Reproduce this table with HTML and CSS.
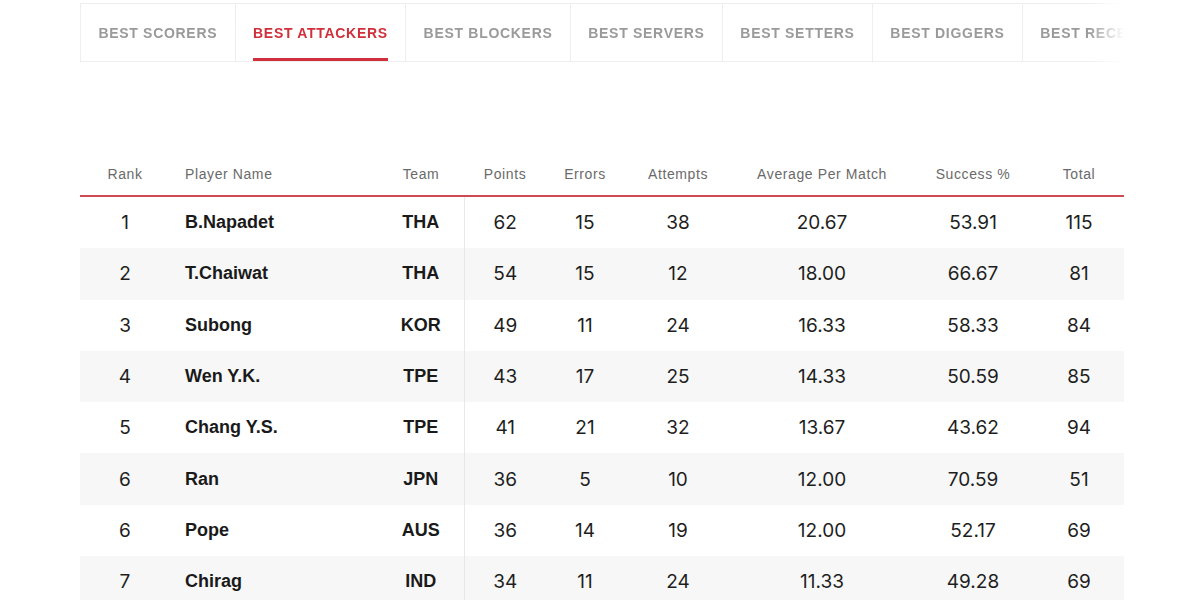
FILE: index.html
```html
<!DOCTYPE html>
<html lang="en">
<head>
<meta charset="utf-8">
<title>Best Attackers</title>
<link rel="stylesheet" href="styles.css">
</head>
<body>
<div class="page">
  <nav class="tabs">
    <a class="tab">BEST SCORERS</a>
    <a class="tab active">BEST ATTACKERS</a>
    <a class="tab">BEST BLOCKERS</a>
    <a class="tab">BEST SERVERS</a>
    <a class="tab">BEST SETTERS</a>
    <a class="tab">BEST DIGGERS</a>
    <a class="tab">BEST RECEIVERS</a>
  </nav>

  <table class="stats">
    <colgroup>
      <col class="c-rank">
      <col class="c-name">
      <col class="c-team">
      <col class="c-points">
      <col class="c-errors">
      <col class="c-attempts">
      <col class="c-avg">
      <col class="c-success">
      <col class="c-total">
    </colgroup>
    <thead>
      <tr>
        <th>Rank</th>
        <th class="left">Player Name</th>
        <th>Team</th>
        <th>Points</th>
        <th>Errors</th>
        <th>Attempts</th>
        <th>Average Per Match</th>
        <th>Success %</th>
        <th>Total</th>
      </tr>
    </thead>
    <tbody>
      <tr><td>1</td><td class="name">B.Napadet</td><td class="team">THA</td><td class="pts">62</td><td>15</td><td>38</td><td>20.67</td><td>53.91</td><td>115</td></tr>
      <tr><td>2</td><td class="name">T.Chaiwat</td><td class="team">THA</td><td class="pts">54</td><td>15</td><td>12</td><td>18.00</td><td>66.67</td><td>81</td></tr>
      <tr><td>3</td><td class="name">Subong</td><td class="team">KOR</td><td class="pts">49</td><td>11</td><td>24</td><td>16.33</td><td>58.33</td><td>84</td></tr>
      <tr><td>4</td><td class="name">Wen Y.K.</td><td class="team">TPE</td><td class="pts">43</td><td>17</td><td>25</td><td>14.33</td><td>50.59</td><td>85</td></tr>
      <tr><td>5</td><td class="name">Chang Y.S.</td><td class="team">TPE</td><td class="pts">41</td><td>21</td><td>32</td><td>13.67</td><td>43.62</td><td>94</td></tr>
      <tr><td>6</td><td class="name">Ran</td><td class="team">JPN</td><td class="pts">36</td><td>5</td><td>10</td><td>12.00</td><td>70.59</td><td>51</td></tr>
      <tr><td>6</td><td class="name">Pope</td><td class="team">AUS</td><td class="pts">36</td><td>14</td><td>19</td><td>12.00</td><td>52.17</td><td>69</td></tr>
      <tr><td>7</td><td class="name">Chirag</td><td class="team">IND</td><td class="pts">34</td><td>11</td><td>24</td><td>11.33</td><td>49.28</td><td>69</td></tr>
    </tbody>
  </table>
</div>
</body>
</html>
```

FILE: styles.css
```css
html, body {
  margin: 0;
  padding: 0;
  background: #ffffff;
}

body {
  font-family: "Liberation Sans", Arial, sans-serif;
  color: #222;
  overflow: hidden;
}

.page {
  width: 1044px;
  margin-left: 80px;
  padding-top: 3px;
}

.tabs {
  display: flex;
  height: 57px;
  border: 1px solid #eeeeee;
  border-right: none;
  box-shadow: 0 1px 2px rgba(0, 0, 0, 0.03);
  overflow: hidden;
  white-space: nowrap;
  -webkit-mask-image: linear-gradient(to right, #000 0, #000 1008px, transparent 1044px);
  mask-image: linear-gradient(to right, #000 0, #000 1008px, transparent 1044px);
}

.tab {
  flex: none;
  display: flex;
  align-items: center;
  padding: 0 17.4px;
  border-right: 1px solid #eeeeee;
  font-size: 14px;
  font-weight: 700;
  letter-spacing: 0.7px;
  color: #9a9a9a;
  position: relative;
}

.tab.active {
  color: #d0303b;
}

.tab.active::after {
  content: "";
  position: absolute;
  left: 17.4px;
  right: 17.4px;
  bottom: 0;
  height: 3px;
  background: #d0303b;
}

.stats {
  margin-top: 91px;
  width: 1044px;
  border-collapse: collapse;
  table-layout: fixed;
}

.c-rank { width: 90px; }
.c-name { width: 208px; }
.c-team { width: 86px; }
.c-points { width: 82px; }
.c-errors { width: 78px; }
.c-attempts { width: 108px; }
.c-avg { width: 180px; }
.c-success { width: 122px; }
.c-total { width: 90px; }

.stats th {
  height: 42px;
  padding: 0;
  font-weight: 400;
  font-size: 14px;
  letter-spacing: 0.6px;
  color: #6a6a6a;
  text-align: center;
  border-bottom: 2px solid #cf4a53;
  vertical-align: middle;
}

.stats th.left {
  text-align: left;
  padding-left: 15px;
}

.stats td {
  height: 51.3px;
  padding: 0;
  text-align: center;
  vertical-align: middle;
  font-family: "Inter", "Liberation Sans", sans-serif;
  font-size: 19px;
  color: #1e1e1e;
}

.stats tbody tr:nth-child(even) td {
  background: #f7f7f7;
}

.stats td.name {
  text-align: left;
  padding-left: 15px;
  font-family: "Liberation Sans", Arial, sans-serif;
  font-weight: 700;
  font-size: 18px;
  color: #1a1a1a;
}

.stats td.team {
  font-family: "Liberation Sans", Arial, sans-serif;
  font-weight: 700;
  font-size: 18px;
  color: #1a1a1a;
}

.stats td.pts {
  border-left: 1px solid #e8e8e8;
}
```
